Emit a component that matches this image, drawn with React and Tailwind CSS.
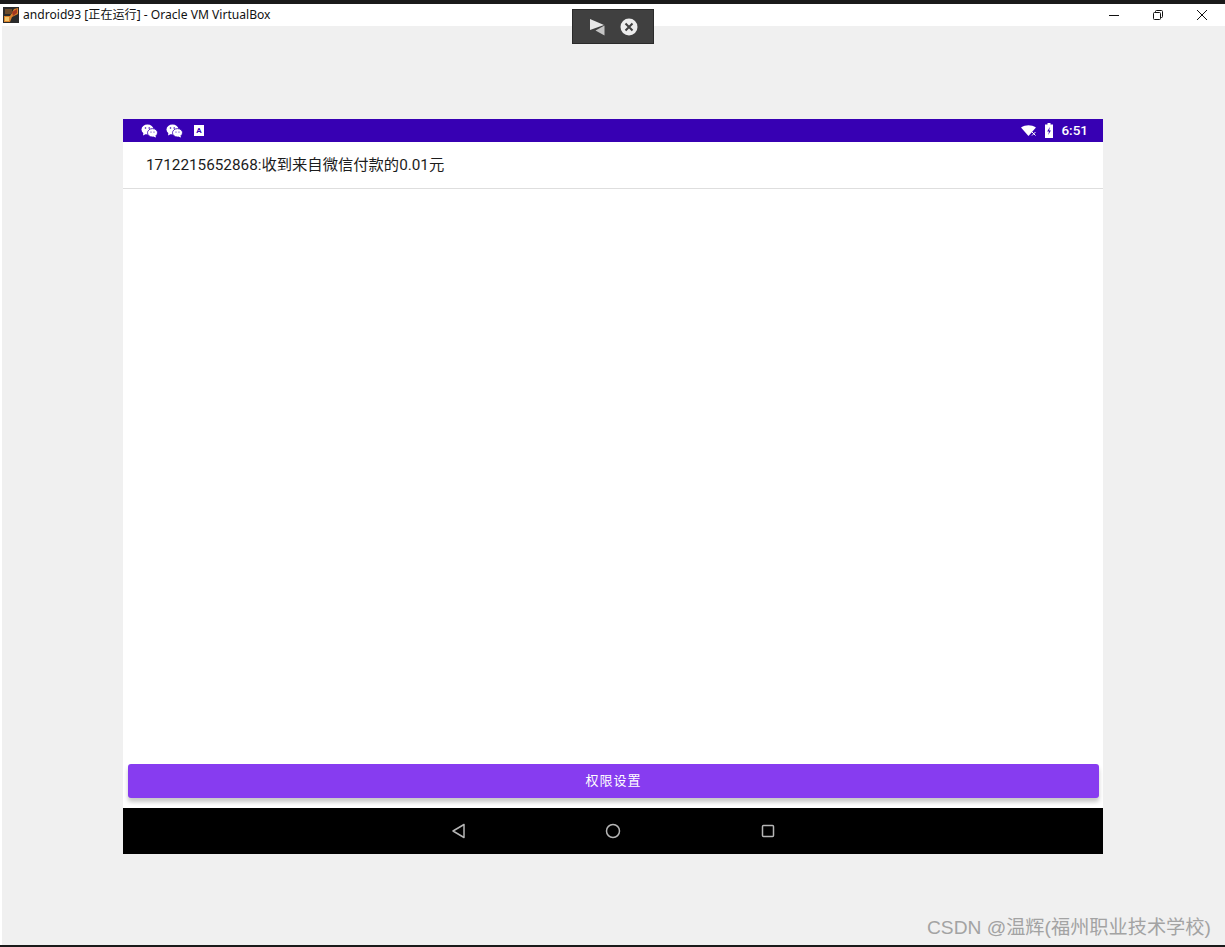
import React from "react";

const androidFont = { fontFamily: 'Roboto, "Noto Sans CJK SC", sans-serif' };

const WeChatIcon = () => (
  <svg width="17" height="14" viewBox="0 0 17 14" fill="white">
    <ellipse cx="6.5" cy="5.5" rx="6" ry="5" />
    <path d="M2.5 8.5 L2 11.5 L6 9.5 Z" />
    <ellipse cx="11.5" cy="8.8" rx="5" ry="4.2" stroke="#3700b3" strokeWidth="0.8" />
    <path d="M14.5 11.5 L15 13.6 L12 12.6 Z" />
    <circle cx="4.5" cy="4" r="0.8" fill="#3700b3" />
    <circle cx="8.2" cy="4" r="0.8" fill="#3700b3" />
    <circle cx="10" cy="8" r="0.6" fill="#3700b3" />
    <circle cx="13" cy="8" r="0.6" fill="#3700b3" />
  </svg>
);

const TitleIcon = () => (
  <svg width="16" height="16" viewBox="0 0 16 16">
    <rect width="16" height="16" fill="#2a2a2a" />
    <path d="M1 15 L1 9 L7 9 L11 2 L15 1 L15 7 L9 10 L7 15 Z" fill="#d9822b" />
    <path d="M2 2 H9 V7 H2 Z" fill="#6b4a2a" />
    <path d="M9 5 L14 2 L14 6 L10 9 Z" fill="#a5371f" />
    <path d="M2 10 H6 V14 H2 Z" fill="#f0c36a" />
  </svg>
);

export default function App() {
  return (
    <div className="w-[1225px] h-[947px] flex flex-col bg-[#f0f0f0] relative overflow-hidden">
      <div className="h-1 bg-[#1a1a1a]" />

      {/* window title bar */}
      <div className="h-[22px] bg-white flex items-center">
        <div className="ml-[3px] mr-1"><TitleIcon /></div>
        <span className="text-[12.1px] text-[#111] whitespace-nowrap" style={{ fontFamily: '"Noto Sans", "Noto Sans CJK SC", sans-serif' }}>
          android93 [正在运行] - Oracle VM VirtualBox
        </span>
        <div className="ml-auto flex items-center">
          <div className="w-[44px] flex justify-center">
            <svg width="12" height="12" viewBox="0 0 12 12"><path d="M1 6.5H11" stroke="#111" strokeWidth="1" /></svg>
          </div>
          <div className="w-[44px] flex justify-center">
            <svg width="12" height="12" viewBox="0 0 12 12" fill="none" stroke="#111" strokeWidth="1">
              <rect x="1.5" y="3.5" width="7" height="7" rx="1" />
              <path d="M3.5 3.5V2.5a1 1 0 0 1 1-1h5a1 1 0 0 1 1 1v5a1 1 0 0 1-1 1H8.5" />
            </svg>
          </div>
          <div className="w-[44px] flex justify-center mr-[1px]">
            <svg width="12" height="12" viewBox="0 0 12 12" stroke="#111" strokeWidth="1"><path d="M1 1L11 11M11 1L1 11" /></svg>
          </div>
        </div>
      </div>

      {/* vm area */}
      <div className="flex-1 border-l-2 border-white pl-[121px] pt-[93px]">
        <div className="w-[980px] h-[735px] bg-white flex flex-col" style={androidFont}>
          <div className="h-[23px] bg-[#3700b3] flex items-center pl-[18px] pr-[15px]">
            <WeChatIcon />
            <div className="ml-2"><WeChatIcon /></div>
            <div className="ml-[11px] w-[10px] h-[11px] bg-white flex items-center justify-center">
              <span className="text-[8px] font-bold text-[#3700b3] leading-none">A</span>
            </div>
            <div className="ml-auto flex items-center">
              <svg width="16" height="11" viewBox="0 0 16 11" fill="white">
                <path d="M0 2.5C4 -0.6 9 -0.6 13 2.5L6.5 11Z" transform="translate(0 0) scale(1.15 1)" />
                <path d="M11 7l3.5 3.5M14.5 7l-3.5 3.5" stroke="white" strokeWidth="1" />
              </svg>
              <svg className="ml-2" width="8" height="15" viewBox="0 0 8 15" fill="white">
                <path d="M2.5 0H5.5V1.5H8V15H0V1.5H2.5Z" />
                <path d="M4.8 4L2.2 8.5H4L3.2 12L5.9 7.5H4.2Z" fill="#3700b3" />
              </svg>
              <span className="ml-2 text-[13.5px] font-medium text-white leading-none">6:51</span>
            </div>
          </div>

          <div className="h-[47px] border-b border-[#dedede] flex items-center pl-[23px] pt-[1px]">
            <span className="text-[15.3px] text-[#1c1c1c] leading-none">1712215652868:收到来自微信付款的0.01元</span>
          </div>

          <div className="flex-1" />

          <div className="pl-[5px] pb-[10px]">
            <div className="w-[971px] h-[34px] bg-[#873cf0] rounded-[3px] shadow-[0_4px_4px_rgba(0,0,0,0.22)] flex items-center justify-center">
              <span className="text-[13px] text-white tracking-[1px]">权限设置</span>
            </div>
          </div>

          <div className="h-[46px] bg-black flex items-center justify-center gap-[131px]">
            <svg width="24" height="24" viewBox="0 0 24 24" fill="none" stroke="#b5b5b5" strokeWidth="1.5"><path d="M18 5.5V18.5L7 12Z" strokeLinejoin="round" /></svg>
            <svg width="24" height="24" viewBox="0 0 24 24" fill="none" stroke="#b5b5b5" strokeWidth="1.5"><circle cx="12" cy="12" r="6.5" /></svg>
            <svg width="24" height="24" viewBox="0 0 24 24" fill="none" stroke="#b5b5b5" strokeWidth="1.5"><rect x="6.5" y="6.5" width="11" height="11" rx="1" /></svg>
          </div>
        </div>
      </div>

      <div className="h-[2px] bg-[#1a1a1a]" />

      {/* mini toolbar sitting over the title bar */}
      <div className="absolute left-[572px] top-[9px] w-[82px] h-[35px] bg-[#404040] border border-[#2a2a2a] flex items-center pl-[16px]">
        <svg width="17" height="18" viewBox="0 0 17 18">
          <path d="M1 1L1 12L15 7Z" fill="#e8e8e8" />
          <path d="M15.5 7.5V17.5L6.5 12.5Z" fill="#c4c4c4" />
        </svg>
        <svg className="ml-[14px]" width="18" height="18" viewBox="0 0 18 18">
          <circle cx="9" cy="9" r="8.5" fill="#ececec" />
          <path d="M5.5 5.5L12.5 12.5M12.5 5.5L5.5 12.5" stroke="#404040" strokeWidth="2" />
        </svg>
      </div>

      {/* watermark */}
      <div className="absolute left-[927px] top-[916px] text-[19.2px] leading-6 text-[#a3a3a3] whitespace-nowrap" style={{ fontFamily: '"Liberation Sans", "Noto Sans CJK SC", sans-serif' }}>
        CSDN @温辉(福州职业技术学校)
      </div>
    </div>
  );
}
